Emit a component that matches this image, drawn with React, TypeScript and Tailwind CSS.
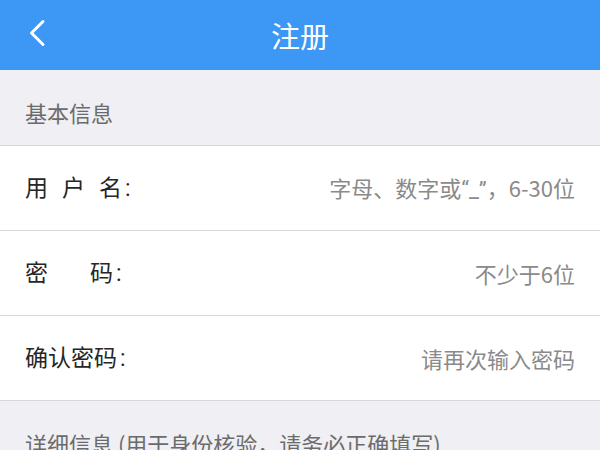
const FONT = "font-['Noto_Sans_CJK_SC','Noto_Sans',sans-serif]";

function Label({ head, tail, spacing }: { head: string; tail: string; spacing: string }) {
  return (
    <span className="text-[23px] text-[#262626]">
      <span className={spacing}>{head}</span>
      {tail}
      <span className="ml-[3px] font-['Roboto',sans-serif]">:</span>
    </span>
  );
}

function SectionTitle({ children }: { children: React.ReactNode }) {
  return (
    <div className="h-[76px] flex items-center pt-[10px] px-[25px] bg-[#efeff4] border-b border-[#d8d8dc] text-[22px] text-[#6b6b6b]">
      {children}
    </div>
  );
}

function Row({ label, placeholder }: { label: React.ReactNode; placeholder: React.ReactNode }) {
  return (
    <div className="h-[85px] flex items-center justify-between px-[25px] border-b border-[#d8d8dc]">
      {label}
      <span className="text-[22px] text-[#8a8a8a]">{placeholder}</span>
    </div>
  );
}

export default function App() {
  return (
    <div className={`w-[600px] h-[450px] overflow-hidden bg-[#efeff4] ${FONT}`}>
      {/* Header */}
      <header className="relative h-[70px] bg-[#3c97f5] flex items-center justify-center">
        <button className="absolute left-[26px] top-[19px] w-[22px] h-[28px]" aria-label="返回">
          <svg viewBox="0 0 22 28" className="w-full h-full" fill="none">
            <path d="M17 2.5 L5.5 14 L17 25.5" stroke="#fff" strokeWidth="3" strokeLinecap="round" strokeLinejoin="round" />
          </svg>
        </button>
        <h1 className="text-[29px] text-white leading-none">注册</h1>
      </header>

      <SectionTitle>基本信息</SectionTitle>

      <div className="bg-white">
        <Row
          label={<Label head="用户" tail="名" spacing="tracking-[14px]" />}
          placeholder={
            <>
              字母、数字或<span className="font-['Roboto',sans-serif]">“_”</span>，6-30位
            </>
          }
        />
        <Row label={<Label head="密" tail="码" spacing="tracking-[42px]" />} placeholder="不少于6位" />
        <Row label={<Label head="确认密" tail="码" spacing="tracking-[0px]" />} placeholder="请再次输入密码" />
      </div>

      <div className="h-[76px] flex items-center pt-[8px] px-[25px] text-[22px] text-[#6b6b6b]">
        详细信息 (用于身份核验，请务必正确填写)
      </div>
    </div>
  );
}
